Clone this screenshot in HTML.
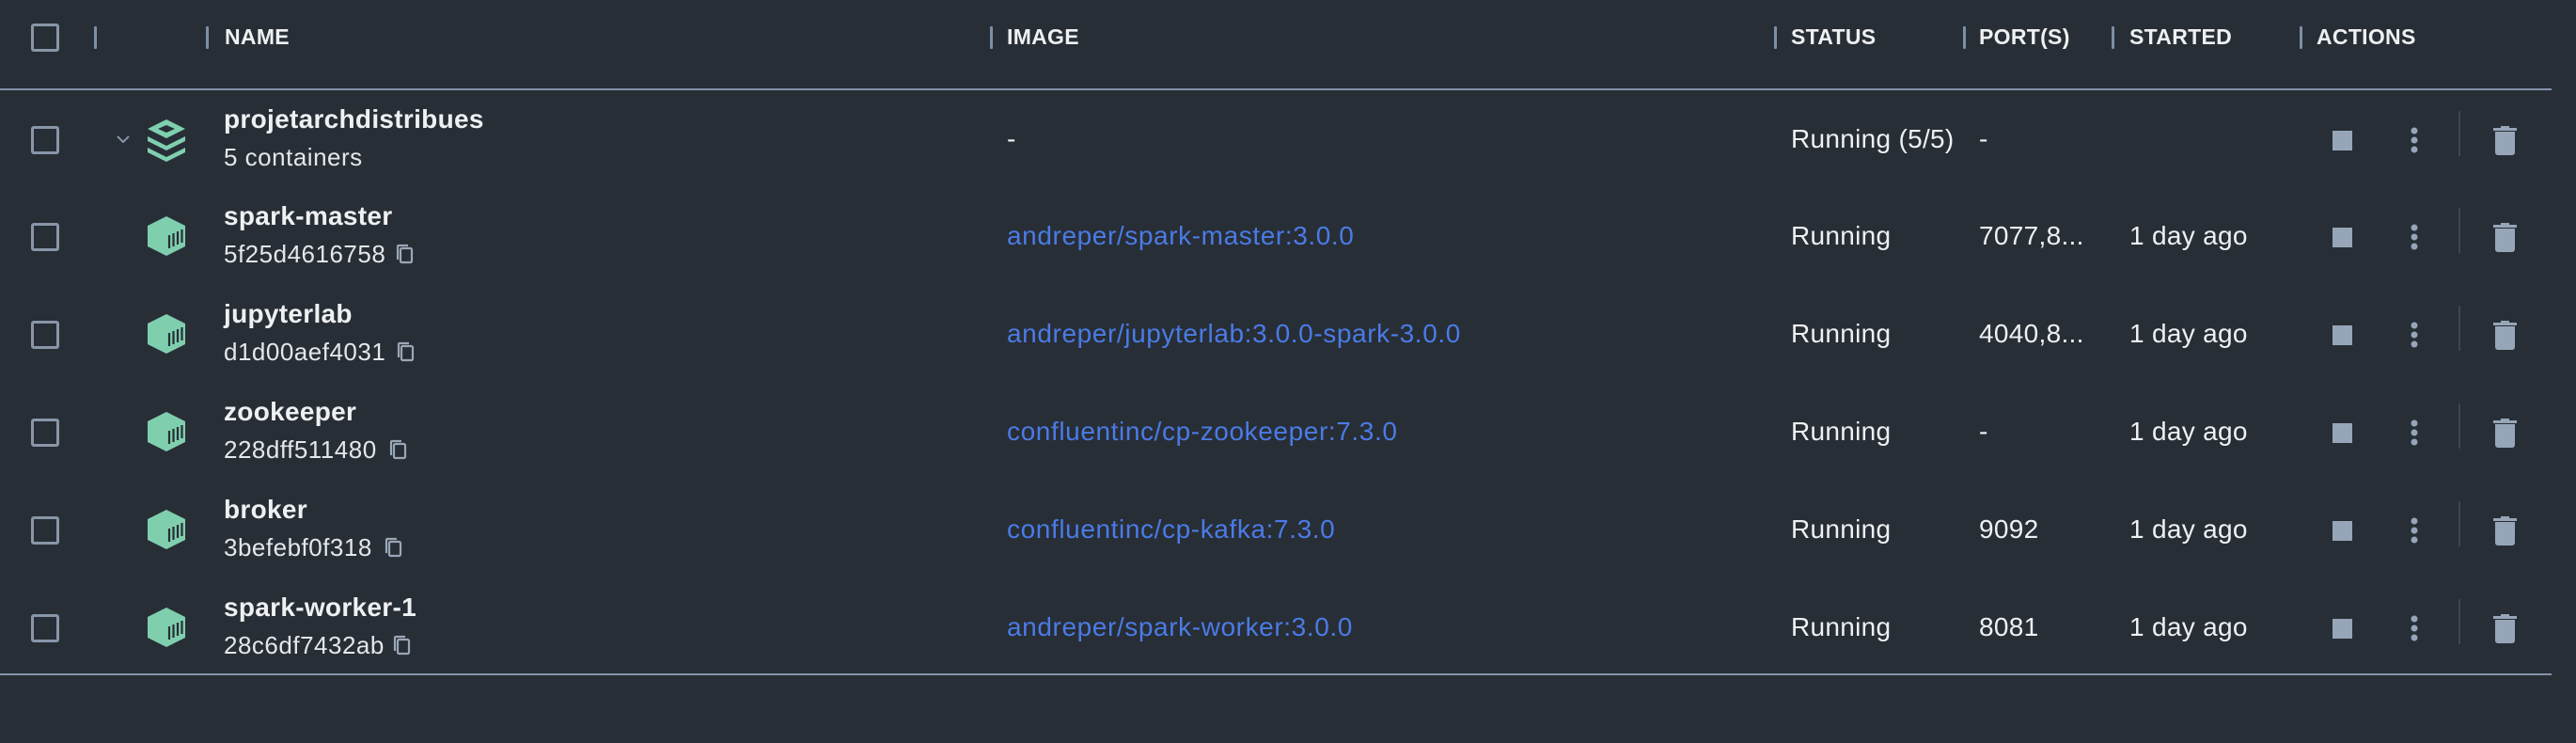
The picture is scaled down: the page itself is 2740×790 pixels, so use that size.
<!DOCTYPE html>
<html><head><meta charset="utf-8"><style>
*{margin:0;padding:0;box-sizing:border-box}
body{width:2740px;height:790px;background:#282e36;font-family:"Liberation Sans",sans-serif;color:#eef0f2;position:relative;overflow:hidden}
.a{position:absolute;white-space:nowrap}
.h{font-size:23px;font-weight:bold;top:26px;letter-spacing:0.3px}
.dv{position:absolute;width:3px;height:24px;top:28px;background:#7d8fa6;border-radius:1px}
.cb{position:absolute;left:33px;width:30px;height:30px;border:3px solid #8896a8;border-radius:3px}
.line{position:absolute;left:0;width:2714px;height:2px;background:#8394ab}
.nm{font-size:28px;font-weight:bold;left:238px;letter-spacing:0.3px}
.sub{font-size:26px;left:238px;color:#e4e7ea;letter-spacing:0.5px}
.img{font-size:28px;left:1071px;color:#4a7be6;letter-spacing:0.6px}
.t{font-size:28px;letter-spacing:0.3px}
.stop{position:absolute;left:2481px;width:21px;height:21px;background:#96a6b8}
.sep{position:absolute;left:2615px;width:2px;height:48px;background:#3d4552}
</style></head><body>
<div class="cb" style="top:25px"></div>
<div class="dv" style="left:100px"></div>
<div class="dv" style="left:219px"></div><div class="a h" style="left:239px">NAME</div>
<div class="dv" style="left:1053px"></div><div class="a h" style="left:1071px">IMAGE</div>
<div class="dv" style="left:1887px"></div><div class="a h" style="left:1905px">STATUS</div>
<div class="dv" style="left:2088px"></div><div class="a h" style="left:2105px">PORT(S)</div>
<div class="dv" style="left:2246px"></div><div class="a h" style="left:2265px">STARTED</div>
<div class="dv" style="left:2446px"></div><div class="a h" style="left:2464px">ACTIONS</div>
<div class="line" style="top:94px"></div>
<div class="line" style="top:716px"></div>

<svg class="a" style="left:0;top:0" width="2740" height="790">
<defs>
<g id="cube"><path d="M0 -21 L20 -11 L20 11 L0 21 L-20 11 L-20 -11Z" fill="#7fcfae"/><path d="M3 -1v14M7.5 -3v14M12 -5v14M16.5 -7v14" stroke="#282e36" stroke-width="2.2"/></g>
<g id="copy" fill="none" stroke="#9aa7b7" stroke-width="2.2"><rect x="4" y="4" width="12" height="15" rx="1.5"/><path d="M1 16V2a1 1 0 0 1 1-1h10"/></g>
<g id="act"><circle cx="2568" cy="-10" r="3.5" fill="#96a6b8"/><circle cx="2568" cy="0" r="3.5" fill="#96a6b8"/><circle cx="2568" cy="10" r="3.5" fill="#96a6b8"/>
<path d="M2652 -13h25v3h-25z M2660 -15h9v3h-9z" fill="#96a6b8"/><path d="M2654 -9h21v22a3 3 0 0 1-3 3h-15a3 3 0 0 1-3-3z" fill="#96a6b8"/></g>
</defs>
<path d="M125 145l6 6 6-6" fill="none" stroke="#8896a8" stroke-width="2"/>
<g transform="translate(177,149)" fill="#7fcfae">
<path d="M0 -22L20 -12L0 -2L-20 -12Z M0 -16L-9 -12L0 -8L9 -12Z" fill-rule="evenodd"/>
<path d="M-20 -4L0 6L20 -4L20 1L0 11L-20 1Z"/>
<path d="M-20 8L0 18L20 8L20 13L0 23L-20 13Z"/>
</g>
<use href="#act" transform="translate(0,149)"/>
<g><use href="#cube" transform="translate(177,251)"/><use href="#copy" transform="translate(422,260)"/><use href="#act" transform="translate(0,252)"/></g>
<g><use href="#cube" transform="translate(177,355)"/><use href="#copy" transform="translate(423,364)"/><use href="#act" transform="translate(0,356)"/></g>
<g><use href="#cube" transform="translate(177,459)"/><use href="#copy" transform="translate(415,468)"/><use href="#act" transform="translate(0,460)"/></g>
<g><use href="#cube" transform="translate(177,563)"/><use href="#copy" transform="translate(410,572)"/><use href="#act" transform="translate(0,564)"/></g>
<g><use href="#cube" transform="translate(177,667)"/><use href="#copy" transform="translate(419,676)"/><use href="#act" transform="translate(0,668)"/></g>
</svg>

<div class="cb" style="top:134px"></div>
<div class="a nm" style="top:111px">projetarchdistribues</div>
<div class="a sub" style="top:152px">5 containers</div>
<div class="a t" style="left:1071px;top:132px">-</div>
<div class="a t" style="left:1905px;top:132px">Running (5/5)</div>
<div class="a t" style="left:2105px;top:132px">-</div>
<div class="stop" style="top:139px"></div><div class="sep" style="top:118px"></div>

<div class="cb" style="top:237px"></div>
<div class="a nm" style="top:214px">spark-master</div>
<div class="a sub" style="top:255px">5f25d4616758</div>
<div class="a img" style="top:235px">andreper/spark-master:3.0.0</div>
<div class="a t" style="left:1905px;top:235px">Running</div>
<div class="a t" style="left:2105px;top:235px">7077,8...</div>
<div class="a t" style="left:2265px;top:235px">1 day ago</div>
<div class="stop" style="top:242px"></div><div class="sep" style="top:221px"></div>

<div class="cb" style="top:341px"></div>
<div class="a nm" style="top:318px">jupyterlab</div>
<div class="a sub" style="top:359px">d1d00aef4031</div>
<div class="a img" style="top:339px">andreper/jupyterlab:3.0.0-spark-3.0.0</div>
<div class="a t" style="left:1905px;top:339px">Running</div>
<div class="a t" style="left:2105px;top:339px">4040,8...</div>
<div class="a t" style="left:2265px;top:339px">1 day ago</div>
<div class="stop" style="top:346px"></div><div class="sep" style="top:325px"></div>

<div class="cb" style="top:445px"></div>
<div class="a nm" style="top:422px">zookeeper</div>
<div class="a sub" style="top:463px">228dff511480</div>
<div class="a img" style="top:443px">confluentinc/cp-zookeeper:7.3.0</div>
<div class="a t" style="left:1905px;top:443px">Running</div>
<div class="a t" style="left:2105px;top:443px">-</div>
<div class="a t" style="left:2265px;top:443px">1 day ago</div>
<div class="stop" style="top:450px"></div><div class="sep" style="top:429px"></div>

<div class="cb" style="top:549px"></div>
<div class="a nm" style="top:526px">broker</div>
<div class="a sub" style="top:567px">3befebf0f318</div>
<div class="a img" style="top:547px">confluentinc/cp-kafka:7.3.0</div>
<div class="a t" style="left:1905px;top:547px">Running</div>
<div class="a t" style="left:2105px;top:547px">9092</div>
<div class="a t" style="left:2265px;top:547px">1 day ago</div>
<div class="stop" style="top:554px"></div><div class="sep" style="top:533px"></div>

<div class="cb" style="top:653px"></div>
<div class="a nm" style="top:630px">spark-worker-1</div>
<div class="a sub" style="top:671px">28c6df7432ab</div>
<div class="a img" style="top:651px">andreper/spark-worker:3.0.0</div>
<div class="a t" style="left:1905px;top:651px">Running</div>
<div class="a t" style="left:2105px;top:651px">8081</div>
<div class="a t" style="left:2265px;top:651px">1 day ago</div>
<div class="stop" style="top:658px"></div><div class="sep" style="top:637px"></div>
</body></html>
